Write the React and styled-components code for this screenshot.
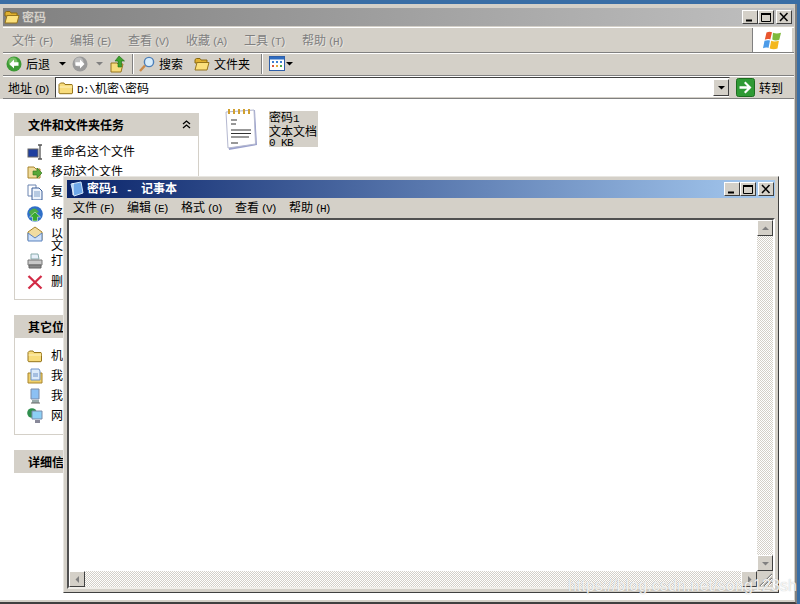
import React from "react";
import styled, { createGlobalStyle } from "styled-components";

const Global = createGlobalStyle`
  html, body { margin: 0; padding: 0; width: 800px; height: 604px; overflow: hidden; background: #3a6ea5; }
  body { font-family: "Noto Sans CJK SC", "Liberation Sans", sans-serif; font-size: 12px; color: #000; }
  * { box-sizing: border-box; }
`;

const Stage = styled.div`position: relative; width: 800px; height: 604px; padding: 4px 3px 0 0; overflow: hidden;`;
const Explorer = styled.div`
  width: 797px; height: 600px; background: #d4d0c8; padding: 4px 1px 2px 2px;
  border-right: 2px solid #808080; border-bottom: 2px solid #404040;
  display: flex; flex-direction: column;
`;
const TitleBar = styled.div`
  height: 18px; margin-left: 1px; flex: none; display: flex; align-items: center; gap: 2px; padding: 0 2px 0 1px;
  background: linear-gradient(90deg, #808080, #c0c0c0);
`;
const ExplorerTitle = styled.span`font-weight: 700; color: #d4d0c8; line-height: 18px;`;
const NotepadTitle = styled.span`font-weight: 700; color: #fff; line-height: 18px; margin-left: 2px;`;
const Latin = styled.span`font-family: "Liberation Mono", monospace; font-size: 11px; letter-spacing: -0.6px;`;
const Dash = styled(Latin)`margin: 0 9px;`;
const Caps = styled.div`display: flex; margin-left: auto;`;
const CapBtn = styled.div`
  width: 16px; height: 14px; margin-left: ${p => (p.$gap ? "2px" : "0")}; background: #d4d0c8;
  border: 1px solid; border-color: #fff #404040 #404040 #fff; display: flex; align-items: center; justify-content: center;
`;
const MenuRow = styled.div`
  height: 26px; margin: 1px 0 0 1px; flex: none; display: flex; align-items: stretch; padding: 0 2px 0 9px;
  border-top: 1px solid #fff; border-bottom: 1px solid #808080;
`;
const MenuList = styled.div`display: flex; align-items: center; gap: ${p => p.$gap}px; padding-top: ${p => p.$drop || 0}px;`;
const MenuItem = styled.span`
  width: 40px; white-space: nowrap; line-height: 14px; color: ${p => (p.$dim ? "#808080" : "#000")};
  text-shadow: ${p => (p.$dim ? "1px 1px 0 #e8e6e1" : "none")};
`;
const Mnemonic = styled(Latin)`margin-left: 2px; letter-spacing: -1.7px;`;
const Flag = styled.div`
  width: 40px; margin-left: auto; background: #fff; border-left: 1px solid #808080;
  display: flex; align-items: center; justify-content: center;
`;
const ToolRow = styled.div`
  height: 23px; margin-left: 1px; flex: none; display: flex; align-items: center; padding: 0 0 2px 3px;
  border-top: 1px solid #fff; border-bottom: 1px solid #808080;
`;
const Tool = styled.span`display: flex; align-items: center; gap: 4px; margin-left: ${p => p.$ml || 0}px; white-space: nowrap;`;
const Sep = styled.i`width: 2px; height: 20px; margin-left: ${p => p.$ml}px; background: #808080; border-right: 1px solid #fff;`;
const AddrRow = styled.div`
  height: 23px; margin-left: 1px; flex: none; display: flex; align-items: center; padding-left: 5px;
  border-top: 1px solid #fff; border-bottom: 1px solid #808080;
`;
const AddrLabel = styled.span`width: 47px; white-space: nowrap; margin-top: -1px;`;
const AddrBox = styled.div`
  width: 675px; height: 21px; background: #fff; display: flex; align-items: center; padding-left: 2px; gap: 3px;
  border: 1px solid; border-color: #404040 #d4d0c8 #d4d0c8 #404040; position: relative;
`;
const AddrText = styled.span`margin-top: -1px;`;
const Drop = styled.div`
  margin-left: auto; width: 16px; height: 17px; margin-right: 0; background: #d4d0c8;
  border: 1px solid; border-color: #fff #404040 #404040 #fff; display: flex; align-items: center; justify-content: center;
`;
const Go = styled.span`display: flex; align-items: center; gap: 4px; margin-left: 6px;`;
const Content = styled.div`flex: 1; min-height: 0; background: #fff; margin-left: -2px; display: flex; padding: 14px 0 0 14px;`;
const Side = styled.div`width: 185px; flex: none; display: flex; flex-direction: column; gap: 15px;`;
const Card = styled.section`display: flex; flex-direction: column;`;
const CardHead = styled.h3`
  margin: 0; height: 23px; background: #d4d0c8; font-size: 12px; font-weight: 700; line-height: 23px; padding: 0 8px 0 14px;
  display: flex; align-items: center; justify-content: space-between; white-space: nowrap;
`;
const CardBody = styled.div`
  height: ${p => p.$h}px; padding-top: ${p => p.$pad}px; display: flex; flex-direction: column; background: #fff;
  border: 1px solid #d4d0c8; border-top: 0;
`;
const Task = styled.div`
  min-height: 20px; display: flex; align-items: flex-start; gap: 8px; padding-left: 12px; line-height: 12px;
  margin-bottom: ${p => p.$mb || 0}px;
`;
const TaskText = styled.span`width: 136px; padding-top: 1px;`;
const Files = styled.div`display: flex; align-items: flex-start; margin: -6px 0 0 25px;`;
const FileText = styled.div`
  background: #d4d0c8; width: 49px; height: 36px; margin: 4px 0 0 11px; line-height: 12px; display: flex; flex-direction: column;
`;
const Notepad = styled.div`
  position: absolute; left: 63px; top: 176px; width: 716px; height: 417px; padding: 3px; display: flex; flex-direction: column;
  background: #d4d0c8; border: 1px solid; border-color: #e8e6e1 #404040 #404040 #e8e6e1;
`;
const NoteTitle = styled.div`
  height: 18px; flex: none; display: flex; align-items: center; padding: 0 1px 0 2px;
  background: linear-gradient(90deg, #0a246a, #a6caf0);
`;
const NoteMenu = styled.div`height: 20px; flex: none; display: flex; align-items: center; padding-left: 6px;`;
const Client = styled.div`
  flex: 1; min-height: 0; background: #fff; display: grid; grid-template-columns: 1fr 16px; grid-template-rows: 1fr 16px;
  border: 2px solid; border-color: #505050 #fff #f0eee9 #505050;
`;
const Doc = styled.div`background: #fff;`;
const VTrack = styled.div`
  display: flex; flex-direction: column; justify-content: space-between;
  background: repeating-conic-gradient(#d4d0c8 0 25%, #fff 0 50%) 0 0 / 2px 2px;
`;
const HTrack = styled(VTrack)`flex-direction: row;`;
const ScrollBtn = styled.div`
  width: 16px; height: 16px; background: #d4d0c8; display: flex; align-items: center; justify-content: center;
  border: 1px solid; border-color: #fff #404040 #404040 #fff;
`;
const Grip = styled.div`background: #d4d0c8; display: flex;`;
const Watermark = styled.div`
  position: absolute; left: 568px; top: 576px; font: 16px/20px "Liberation Sans", sans-serif; letter-spacing: 0.1px;
  color: rgba(255, 255, 255, 0.85); text-shadow: 0 0 1px rgba(120, 120, 120, 0.55); white-space: nowrap;
`;

const Folder = ({ s = 16 }) => (
  <svg width={s} height={s} viewBox="0 0 16 16" style={{ flex: "none" }}>
    <path d="M1 4.500 2.500 3H6l1 1.500h7l.5 1V13l-.5.7H1.600L1 13z" fill="#f8dc7c" stroke="#96751c" />
    <path d="M1.600 6.500h12.800v1H1.600z" fill="#fff3c0" />
  </svg>
);
const OpenFolder = () => (
  <svg width="16" height="16" viewBox="0 0 16 16" style={{ flex: "none" }}>
    <path d="M1 3.500 2.500 2.500H6L7 4h6v3H1z" fill="#e0b030" stroke="#8a6a10" />
    <path d="M1 14 3 6.500h12L13 14z" fill="#fbe07c" stroke="#96751c" />
  </svg>
);
const Round = ({ c1, c2, d = "left" }) => (
  <svg width="16" height="16" viewBox="0 0 16 16">
    <circle cx="8" cy="8" r="7.500" fill={c1} />
    <circle cx="7" cy="6" r="4.500" fill={c2} opacity=".55" />
    <path d={d === "left" ? "M8 3.500 3.500 8 8 12.500V9.700h4.500V6.300H8z" : "M8 3.500 12.500 8 8 12.500V9.700H3.500V6.300H8z"} fill="#fff" />
  </svg>
);
const Tri = ({ c = "#000", d = "down", w = 5 }) => (
  <svg width={w + 2} height={w + 2} viewBox="0 0 7 7">
    <path d={d === "down" ? "M0 2h7L3.500 5.500z" : d === "up" ? "M0 5h7L3.500 1.500z" : d === "left" ? "M5 0v7L1.500 3.500z" : "M2 0v7l3.500-3.500z"} fill={c} />
  </svg>
);
const UpIcon = () => (
  <svg width="16" height="18" viewBox="0 0 16 18">
    <path d="M1 8h6l1 1h5l-2 8H1z" fill="#f8dc7c" stroke="#96751c" />
    <path d="M9 1 14.500 6H11.500V12H8V6H5z" fill="#3fa32c" stroke="#1c6a14" strokeWidth=".6" />
  </svg>
);
const Search = () => (
  <svg width="16" height="16" viewBox="0 0 16 16">
    <path d="M1 15 6 9.500" stroke="#c98a4a" strokeWidth="2.400" />
    <circle cx="10" cy="6" r="4.600" fill="#d7ecfb" stroke="#4d7fb8" strokeWidth="1.400" />
  </svg>
);
const Views = () => (
  <svg width="16" height="15" viewBox="0 0 16 15">
    <rect x=".5" y=".5" width="15" height="14" fill="#fff" stroke="#2f5fa8" />
    <rect x="1" y="1" width="14" height="2.500" fill="#2f6cc0" />
    <path d="M3 5h2v2H3zM7 5h2v2H7zM11 5h2v2h-2z" fill="#3f7fd0" />
    <path d="M3 9h2v2H3z" fill="#d8553b" /><path d="M7 9h2v2H7z" fill="#e0a93a" /><path d="M11 9h2v2h-2z" fill="#4da64a" />
  </svg>
);
const GoIcon = () => (
  <svg width="19" height="19" viewBox="0 0 19 19">
    <rect x=".5" y=".5" width="18" height="18" rx="2" fill="#2f9a35" stroke="#1d6d20" />
    <path d="M9.500 3.500 15.500 9.500 9.500 15.500 8 14l3.200-3.200H3.500V8.200h7.700L8 5z" fill="#fff" />
  </svg>
);
const WinFlag = () => (
  <svg width="21" height="19" viewBox="0 0 20 19">
    <path d="M4 1.500c2-1 4-1 5.500-.2L7.800 8.500c-2-.7-3.500-.6-5.500.2z" fill="#e8552f" />
    <path d="M10.500 1.800c2.500 1 5 1 8 0l-1.700 7c-2.500 1-5 1-7-.2z" fill="#7fba3c" />
    <path d="M2 9.800c2-.8 3.500-.9 5.500-.2L6 17c-2-.7-3.500-.6-5.500.2z" fill="#4c9be8" />
    <path d="M8.700 9.800c2 1 4.500 1 7.700 0L15 17.500c-2.500 1-5 1-7.800 0z" fill="#f4b81f" />
  </svg>
);
const NoteFile = () => (
  <svg width="34" height="45" viewBox="0 0 34 45" style={{ flex: "none" }}>
    <path d="M3 5 31 3 33 38 5 43z" fill="#9aa0cc" />
    <path d="M2 5 30 3 31.500 37 4 41z" fill="#fff" stroke="#b4b8d0" />
    <path d="M7 13h6M7 17h5M7 23h20M7 26.500h20M7 30h18M7 36h7" stroke="#333" strokeWidth="1.100" />
    <path d="M5 2v5M10 2v5M15 2v5M20 2v5M25 2v5" stroke="#d0a030" strokeWidth="2" />
  </svg>
);
const NoteSmall = () => (
  <svg width="16" height="16" viewBox="0 0 16 16" style={{ flex: "none" }}>
    <path d="M2 3 12 1l2 11-9 3z" fill="#6fa8e8" stroke="#cfe6fa" />
    <path d="M4 2v12" stroke="#fff" />
  </svg>
);
const icons = {
  rename: <g><rect x="1" y="5" width="10" height="8" fill="#1f3f9f" stroke="#666" /><path d="M13 1v14M11 1h4M11 15h4" stroke="#555" strokeWidth="1.300" /></g>,
  move: <g><path d="M1 3h6l2 2h4v9H1z" fill="#f0dc9c" stroke="#a8842c" /><path d="M6 7h4V4l5 5-5 5v-3H6z" fill="#57a838" stroke="#2c6e1a" strokeWidth=".6" /></g>,
  copy: <g><path d="M1 1h8v11H1z" fill="#fff" stroke="#6b84b0" /><path d="M5 4h7l3 3v9H5z" fill="#eef4fc" stroke="#3d5f98" /><path d="M7 8h6M7 10h6M7 12h6" stroke="#7f9fc8" /></g>,
  web: <g><circle cx="8" cy="8" r="7.800" fill="#2f6fc8" /><path d="M2 6q4-5 7-3l3 3-5 2-1 4q-3-3-4-6z" fill="#4cab43" /><path d="M8 6l5.500 5H10.500v4H5.500v-4H2.500z" fill="#37a82e" stroke="#fff" strokeWidth=".5" /></g>,
  mail: <g><path d="M1 6 8 1l7 5v8H1z" fill="#f0dca0" stroke="#a8842c" /><path d="M1 7l7 5 7-5v8H1z" fill="#cfe2fa" stroke="#5b82bd" /></g>,
  print: <g><path d="M4 1h7l1 5H4z" fill="#e8f0fa" stroke="#8aa" /><path d="M1 7h14v5H1z" fill="#c8c8c8" stroke="#777" /><path d="M2 12h12v3H2z" fill="#888" stroke="#666" /></g>,
  del: <path d="M1.500 2 14.500 14.500M14.500 2 1.500 14.500" stroke="#d22b46" strokeWidth="2.300" />,
  docs: <g><path d="M1 5h14v10H1z" fill="#f0d06a" stroke="#a8842c" /><path d="M4 1h8l1 2v9H4z" fill="#dceafa" stroke="#6f93c8" /><path d="M6 6h5M6 8h5" stroke="#6f93c8" /></g>,
  pc: <g><path d="M4 1h8v10H4z" fill="#8cc0f4" stroke="#7a8aa8" /><path d="M5 12h7v3H5z" fill="#9aa" /><path d="M4 15h9" stroke="#666" /></g>,
  net: <g><circle cx="5" cy="5" r="4.800" fill="#2f8f4e" /><path d="M5 3h10v8H5z" fill="#8cd0f6" stroke="#7a8aa8" /><path d="M8 12h5v3H8z" fill="#889" /></g>,
};
const Ico = ({ n }) => (
  <svg width="16" height="16" viewBox="0 0 16 16" style={{ flex: "none" }}>{icons[n]}</svg>
);
const MinIco = () => <svg width="10" height="10" viewBox="0 0 10 10"><path d="M1 7.500h6v2H1z" /></svg>;
const MaxIco = () => <svg width="10" height="10" viewBox="0 0 10 10"><path d="M.5 1.500h9v8h-9z" fill="none" stroke="#000" /><path d="M0 1h10v2H0z" /></svg>;
const CloseIco = () => <svg width="10" height="10" viewBox="0 0 10 10"><path d="M1 1l7.500 8M8.500 1 1 9" stroke="#000" strokeWidth="1.500" /></svg>;
const Chevron = () => (
  <svg width="9" height="9" viewBox="0 0 9 9"><path d="M1 4 4.500 1 8 4M1 8l3.500-3L8 8" fill="none" stroke="#000" strokeWidth="1.300" /></svg>
);
const Capbtns = () => (
  <Caps>
    <CapBtn><MinIco /></CapBtn><CapBtn><MaxIco /></CapBtn><CapBtn $gap><CloseIco /></CapBtn>
  </Caps>
);
const Grippy = () => (
  <svg width="16" height="16" viewBox="0 0 16 16"><path d="M3 15 15 3M7 15l8-8M11 15l4-4" stroke="#808080" strokeWidth="1.200" /><path d="M4 15 15 4M8 15l7-7M12 15l3-3" stroke="#fff" /></svg>
);

const exMenu = [["文件", "F"], ["编辑", "E"], ["查看", "V"], ["收藏", "A"], ["工具", "T"], ["帮助", "H"]];
const npMenu = [["文件", "F"], ["编辑", "E"], ["格式", "O"], ["查看", "V"], ["帮助", "H"]];
const tasks = [
  ["rename", "重命名这个文件"], ["move", "移动这个文件"], ["copy", "复制这个文件", 2], ["web", "将这个文件发布到 Web"],
  ["mail", "以电子邮件的形式发送此文件", 2], ["print", "打印这个文件", 1], ["del", "删除这个文件"],
];
const places = [["folder", "机密"], ["docs", "我的文档"], ["pc", "我的电脑"], ["net", "网上邻居"]];

export default function App() {
  return (
    <Stage>
      <Global />
      <Explorer>
        <TitleBar>
          <OpenFolder />
          <ExplorerTitle>密码</ExplorerTitle>
          <Capbtns />
        </TitleBar>
        <MenuRow>
          <MenuList $gap={18} $drop={1}>
            {exMenu.map(([t, k]) => <MenuItem key={t} $dim>{t}<Mnemonic>({k})</Mnemonic></MenuItem>)}
          </MenuList>
          <Flag><WinFlag /></Flag>
        </MenuRow>
        <ToolRow>
          <Tool><Round c1="#3d9a35" c2="#a8e08c" /><span>后退</span></Tool>
          <Tool $ml={9}><Tri /></Tool>
          <Tool $ml={6}><Round c1="#9a9a9a" c2="#dcdcdc" d="right" /></Tool>
          <Tool $ml={8}><Tri c="#808080" /></Tool>
          <Tool $ml={7}><UpIcon /></Tool>
          <Sep $ml={6} />
          <Tool $ml={5}><Search />搜索</Tool>
          <Tool $ml={11}><OpenFolder />文件夹</Tool>
          <Sep $ml={11} />
          <Tool $ml={6}><Views /></Tool>
          <Tool $ml={1}><Tri /></Tool>
        </ToolRow>
        <AddrRow>
          <AddrLabel>地址<Mnemonic>(D)</Mnemonic></AddrLabel>
          <AddrBox>
            <Folder />
            <AddrText><Latin>D:\</Latin>机密<Latin>\</Latin>密码</AddrText>
            <Drop><Tri /></Drop>
          </AddrBox>
          <Go><GoIcon />转到</Go>
        </AddrRow>
        <Content>
          <Side>
            <Card>
              <CardHead>文件和文件夹任务<Chevron /></CardHead>
              <CardBody $h={164} $pad={8}>
                {tasks.map(([i, t, mb]) => (
                  <Task key={t} $mb={mb}><Ico n={i} /><TaskText>{t}</TaskText></Task>
                ))}
              </CardBody>
            </Card>
            <Card>
              <CardHead>其它位置</CardHead>
              <CardBody $h={97} $pad={10}>
                {places.map(([i, t]) => (
                  <Task key={t}>{i === "folder" ? <Folder /> : <Ico n={i} />}<TaskText>{t}</TaskText></Task>
                ))}
              </CardBody>
            </Card>
            <Card>
              <CardHead>详细信息</CardHead>
            </Card>
          </Side>
          <Files>
            <NoteFile />
            <FileText>
              <span>密码<Latin>1</Latin></span>
              <span>文本文档</span>
              <Latin>0 KB</Latin>
            </FileText>
          </Files>
        </Content>
      </Explorer>
      <Notepad>
        <NoteTitle>
          <NoteSmall />
          <NotepadTitle>密码<Latin>1</Latin><Dash>-</Dash>记事本</NotepadTitle>
          <Capbtns />
        </NoteTitle>
        <NoteMenu>
          <MenuList $gap={14}>
            {npMenu.map(([t, k]) => <MenuItem key={t}>{t}<Mnemonic>({k})</Mnemonic></MenuItem>)}
          </MenuList>
        </NoteMenu>
        <Client>
          <Doc />
          <VTrack>
            <ScrollBtn><Tri c="#808080" d="up" /></ScrollBtn>
            <ScrollBtn><Tri c="#808080" /></ScrollBtn>
          </VTrack>
          <HTrack>
            <ScrollBtn><Tri c="#808080" d="left" /></ScrollBtn>
            <ScrollBtn><Tri c="#808080" d="right" /></ScrollBtn>
          </HTrack>
          <Grip><Grippy /></Grip>
        </Client>
      </Notepad>
      <Watermark>https://blog.csdn.net/song123sh</Watermark>
    </Stage>
  );
}
